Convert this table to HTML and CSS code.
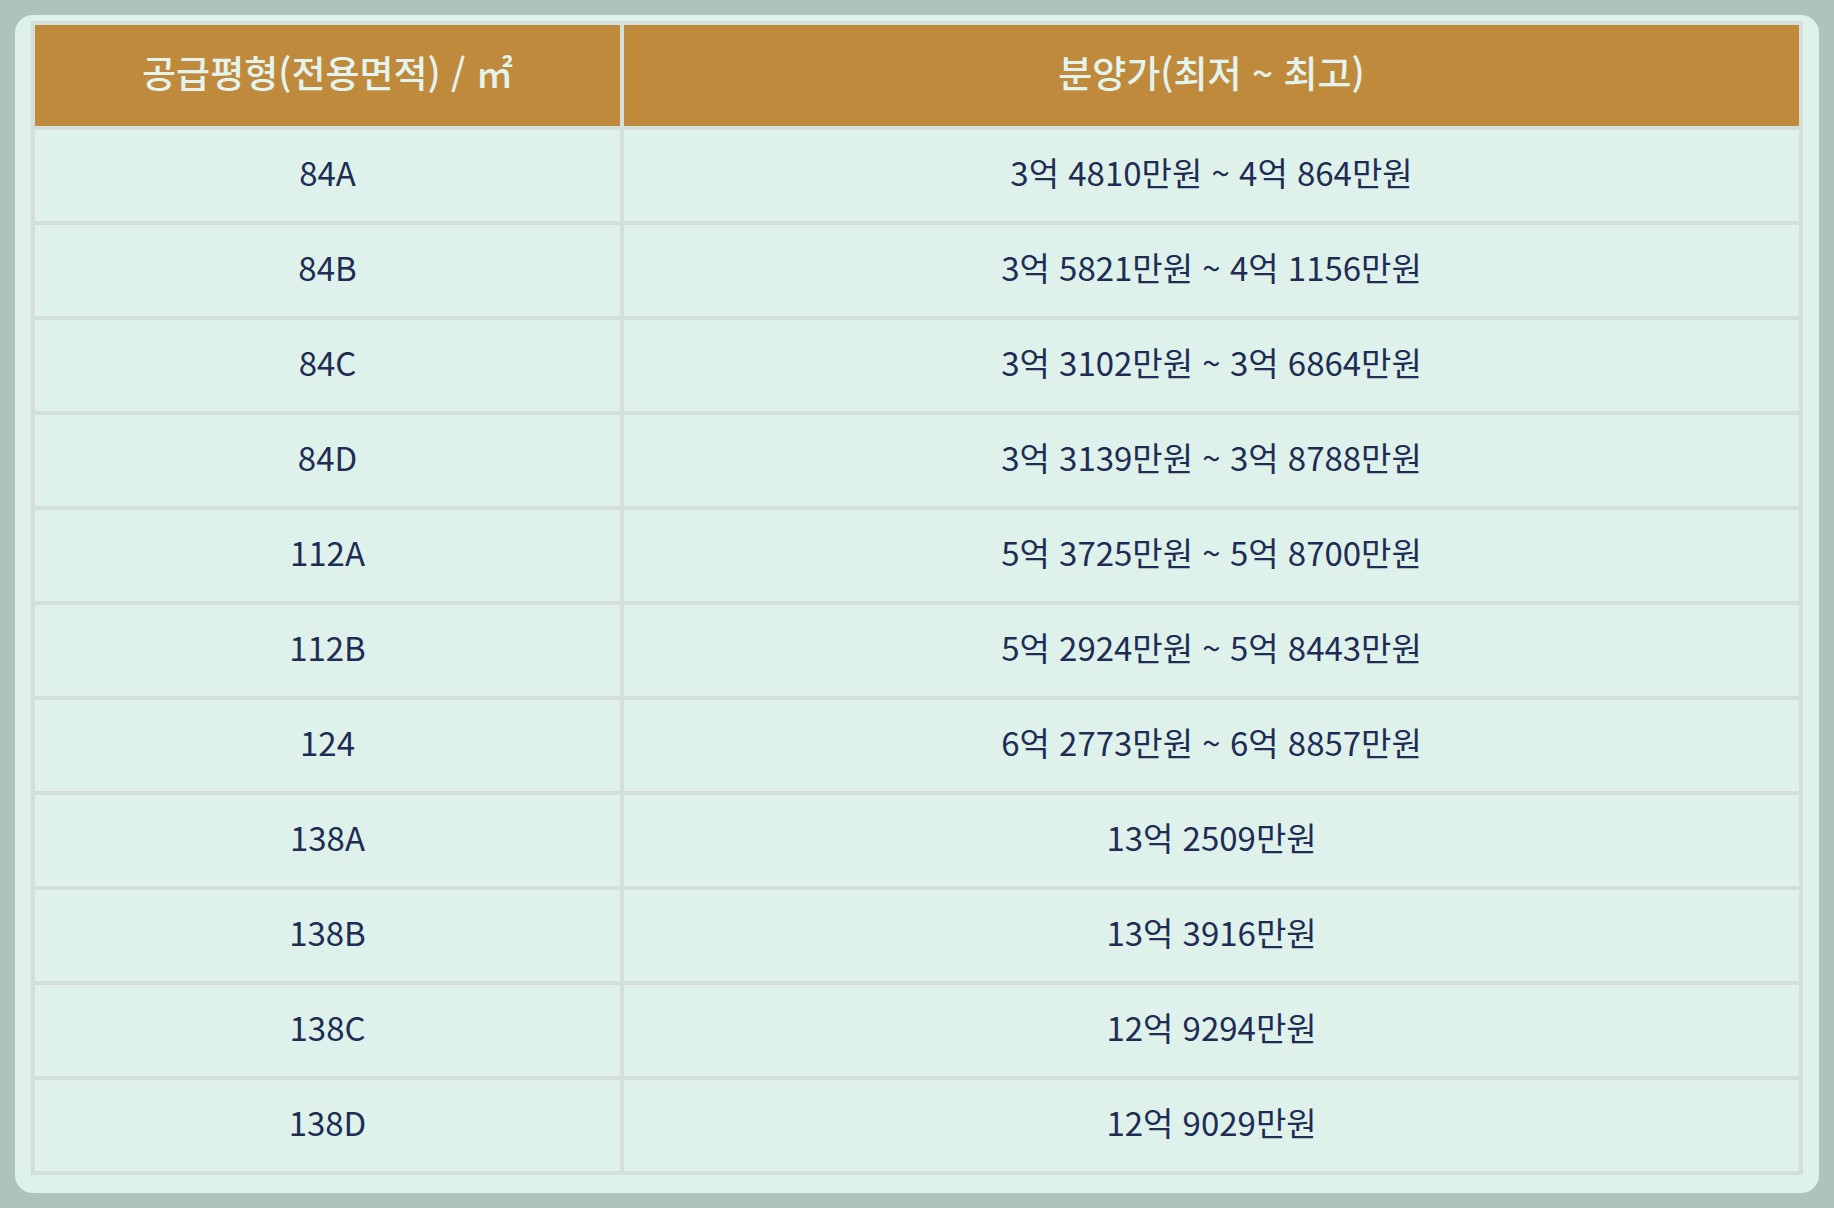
FILE: index.html
```html
<!DOCTYPE html>
<html lang="ko">
<head>
<meta charset="utf-8">
<title>분양가</title>
<link rel="stylesheet" href="styles.css">
</head>
<body>
<div class="card">
  <table class="price-table">
    <colgroup><col class="c1"><col class="c2"></colgroup>
    <thead>
      <tr><th>공급평형(전용면적) / ㎡</th><th>분양가(최저 ~ 최고)</th></tr>
    </thead>
    <tbody>
      <tr><td>84A</td><td>3억 4810만원 ~ 4억 864만원</td></tr>
      <tr><td>84B</td><td>3억 5821만원 ~ 4억 1156만원</td></tr>
      <tr><td>84C</td><td>3억 3102만원 ~ 3억 6864만원</td></tr>
      <tr><td>84D</td><td>3억 3139만원 ~ 3억 8788만원</td></tr>
      <tr><td>112A</td><td>5억 3725만원 ~ 5억 8700만원</td></tr>
      <tr><td>112B</td><td>5억 2924만원 ~ 5억 8443만원</td></tr>
      <tr><td>124</td><td>6억 2773만원 ~ 6억 8857만원</td></tr>
      <tr><td>138A</td><td>13억 2509만원</td></tr>
      <tr><td>138B</td><td>13억 3916만원</td></tr>
      <tr><td>138C</td><td>12억 9294만원</td></tr>
      <tr><td>138D</td><td>12억 9029만원</td></tr>
    </tbody>
  </table>
</div>
</body>
</html>
```

FILE: styles.css
```css
html, body {
  margin: 0;
  padding: 0;
}
body {
  background: #b0c2bd;
  padding: 15px;
  font-family: "Noto Sans CJK KR", "Noto Sans", sans-serif;
}
.card {
  background: #def2eb;
  border-radius: 18px;
  padding: 6px 16px 16px 16px;
  height: 1178px;
  box-sizing: border-box;
}
.price-table {
  width: 100%;
  border-collapse: collapse;
  table-layout: fixed;
  border: 4px solid #d4dedb;
}
.c1 { width: 589px; }
.price-table th,
.price-table td {
  border: 4px solid #d4dedb;
  text-align: center;
  padding: 0;
  line-height: 1.2;
}
.price-table th {
  background: #c08a3c;
  color: #e3f4ee;
  font-size: 37px;
  font-weight: 500;
  height: 94px;
  padding-bottom: 7px;
}
.price-table td {
  color: #1f2c54;
  font-size: 33px;
  font-weight: 400;
  height: 85px;
  padding-bottom: 6px;
}
```
